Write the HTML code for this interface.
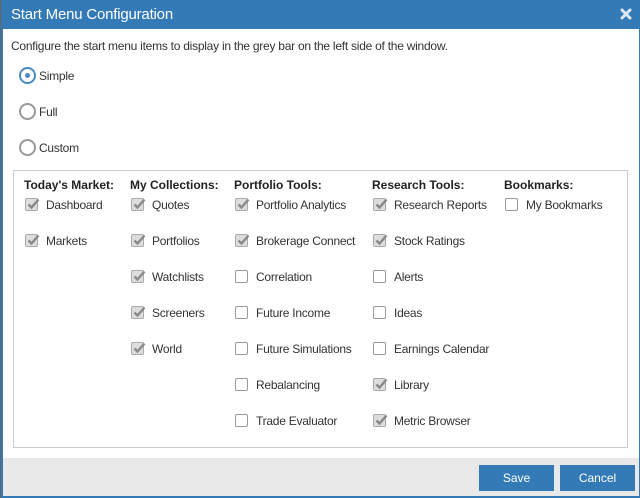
<!DOCTYPE html>
<html><head><style>
*{margin:0;padding:0;box-sizing:border-box}
body{width:640px;height:498px;overflow:hidden;background:#337ab7;font-family:"Liberation Sans",Arial,sans-serif;font-size:12px;color:#333;position:relative}
.lb{position:absolute;left:0;top:0;width:1px;height:498px;background:#666}
.hdr{position:absolute;left:0;top:0;width:640px;height:29px;color:#fff;font-size:15px;line-height:29px;padding-left:11px;letter-spacing:-0.2px}
.x{position:absolute;right:8px;top:8px}
.body{position:absolute;left:3px;top:29px;width:636px;height:429px;background:#fff}
.foot{position:absolute;left:3px;top:458px;width:636px;height:38px;background:#e9e9e9}
.t{position:absolute;white-space:nowrap;letter-spacing:-0.25px}
.radio{position:absolute;left:19px;width:17px;height:17px;border:2px solid #999;border-radius:50%;background:#fff}
.radio.on{border-color:#4a8bc2}
.radio.on::after{content:"";position:absolute;left:4px;top:4px;width:5px;height:5px;border-radius:50%;background:#4a8bc2}
.panel{position:absolute;left:13px;top:170px;width:615px;height:278px;border:1px solid #ccc}
.cb{position:absolute;width:13px;height:13px;border:1px solid #999;border-radius:2px;background:#fff}
.cb.c{background:#ddd;border-color:#aaa}
.cb svg{position:absolute;left:0;top:-2px}
.h{font-weight:bold;font-size:12px;color:#222;letter-spacing:0}
.btn{position:absolute;top:465px;width:75px;height:26px;background:#337ab7;color:#fff;font-size:12px;text-align:center;line-height:26px}
</style></head><body>
<div class="lb"></div>
<div class="hdr">Start Menu Configuration
<svg class="x" width="12" height="12" viewBox="0 0 12 12"><path d="M2 2L10 10M10 2L2 10" stroke="#dde8f2" stroke-width="3" stroke-linecap="round"/></svg></div>
<div class="body"></div>
<div class="foot"></div>
<div class="t" style="left:11px;top:39px">Configure the start menu items to display in the grey bar on the left side of the window.</div>
<div class="radio on" style="top:67px"></div><div class="t" style="left:39px;top:69px">Simple</div>
<div class="radio" style="top:103px"></div><div class="t" style="left:39px;top:105px">Full</div>
<div class="radio" style="top:139px"></div><div class="t" style="left:39px;top:141px">Custom</div>
<div class="panel"></div>
<div id="cols"></div>
<div class="btn" style="left:479px">Save</div>
<div class="btn" style="left:560px">Cancel</div>
<script>
var cols=[[25,"Today's Market:",[["Dashboard",1],["Markets",1]]],
[131,"My Collections:",[["Quotes",1],["Portfolios",1],["Watchlists",1],["Screeners",1],["World",1]]],
[235,"Portfolio Tools:",[["Portfolio Analytics",1],["Brokerage Connect",1],["Correlation",0],["Future Income",0],["Future Simulations",0],["Rebalancing",0],["Trade Evaluator",0]]],
[373,"Research Tools:",[["Research Reports",1],["Stock Ratings",1],["Alerts",0],["Ideas",0],["Earnings Calendar",0],["Library",1],["Metric Browser",1]]],
[505,"Bookmarks:",[["My Bookmarks",0]]]];
var h="";
cols.forEach(function(c){var x=c[0];
h+='<div class="t h" style="left:'+(x-1)+'px;top:178px">'+c[1]+'</div>';
c[2].forEach(function(it,i){var y=198+i*36;
h+='<div class="cb'+(it[1]?' c':'')+'" style="left:'+x+'px;top:'+y+'px">'+(it[1]?'<svg width="14" height="14" viewBox="0 0 14 14"><path d="M2.5 7.5L5.5 10.5L12.5 2.5" stroke="#888" stroke-width="2.4" fill="none"/></svg>':'')+'</div>';
h+='<div class="t" style="left:'+(x+21)+'px;top:'+y+'px">'+it[0]+'</div>';});});
document.getElementById("cols").innerHTML=h;
</script>
</body></html>
